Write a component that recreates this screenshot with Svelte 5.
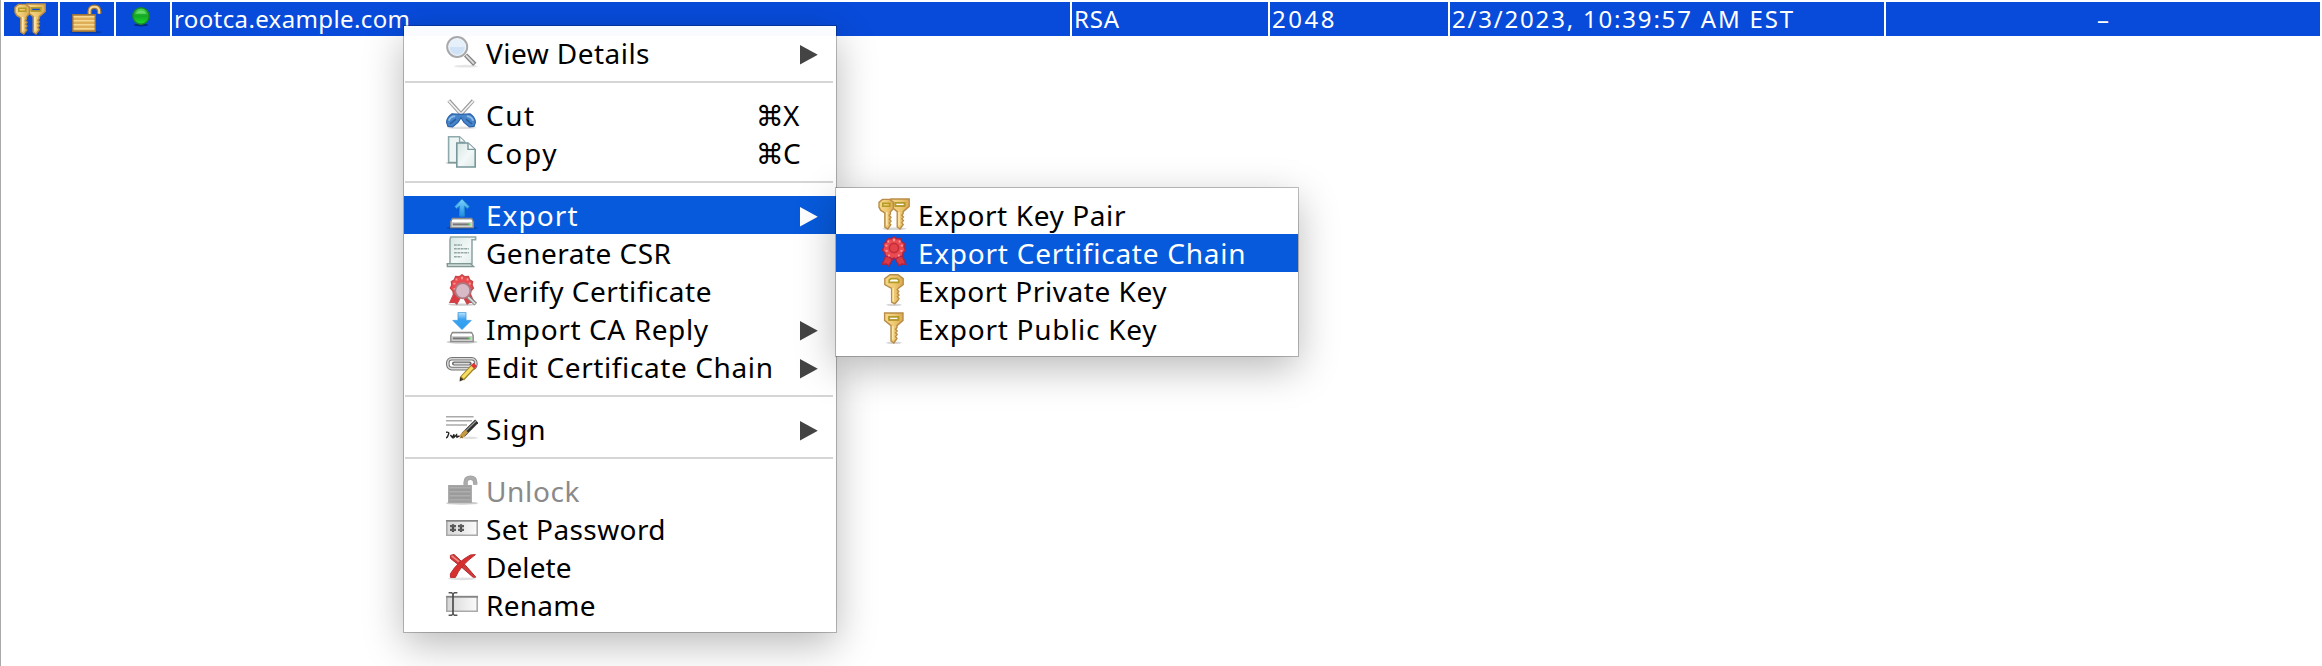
<script>
  const groups = [
    [{ icon: 'zoom', label: 'View Details', width: 163.5, arrow: true }],
    [
      { icon: 'cut', label: 'Cut', width: 48, keys: '⌘X' },
      { icon: 'copy', label: 'Copy', width: 70.5, keys: '⌘C' }
    ],
    [
      { icon: 'export', label: 'Export', width: 91.5, arrow: true, active: true },
      { icon: 'script', label: 'Generate CSR', width: 185 },
      { icon: 'verify', label: 'Verify Certificate', width: 225.5 },
      { icon: 'import', label: 'Import CA Reply', width: 222, arrow: true },
      { icon: 'chain', label: 'Edit Certificate Chain', width: 287, arrow: true }
    ],
    [{ icon: 'sign', label: 'Sign', width: 59.5, arrow: true }],
    [
      { icon: 'lockgray', label: 'Unlock', width: 93.5, disabled: true },
      { icon: 'password', label: 'Set Password', width: 179.5 },
      { icon: 'delete', label: 'Delete', width: 85.5 },
      { icon: 'rename', label: 'Rename', width: 109.5 }
    ]
  ];

  const exports = [
    { icon: 'pair', label: 'Export Key Pair', width: 207.5 },
    { icon: 'ribbon', label: 'Export Certificate Chain', width: 327.5, active: true },
    { icon: 'roundkey', label: 'Export Private Key', width: 248.5 },
    { icon: 'squarekey', label: 'Export Public Key', width: 238.5 }
  ];

  // Tracks the text out so that it fills the given advance width.
  function fit(node, width) {
    const natural = node.getBoundingClientRect().width;
    const gaps = node.textContent.length - 1;
    if (gaps > 0) node.style.letterSpacing = `${(width - natural) / gaps}px`;
  }
</script>

{#snippet roundHead()}
  <path d="M5 .7h3.6l1.9 1.4v3.2L9 7v1l-.6.8.9.9-.8.9.8.9-.8 1 .7.9-1.5 2.1-1.5-.9V7.4L4.2 6.2 3.3 4.6V2.2z" fill="url(#gold)" stroke="#b98d48" stroke-width=".7" />
  <path d="M5.2 2.6h3.5v1.5H5.2z" fill="none" stroke="#b39b27" stroke-width=".8" />
  <path d="M7.2 7v6.8" stroke="#fbe7ad" stroke-width=".8" />
{/snippet}

{#snippet squareHead()}
  <path fill-rule="evenodd" d="M3.3.5h9.2v3.7L9.5 6.8v1l-.7.8.8.9-.8.9.8.9-.8 1 .7.9-1.6 2.3-1.4-1V6.8L3.3 4.2zM5.7 2.4v1.6h4.4V2.4z" fill="url(#gold)" stroke="#b98d48" stroke-width=".7" />
  <path d="M5.5 2.4h4.8v1.6H5.5z" fill="none" stroke="#b39b27" stroke-width=".8" />
  <path d="M7.4 7v6.8" stroke="#fbe7ad" stroke-width=".8" />
{/snippet}

{#snippet pair()}
  <ellipse cx="8.2" cy="15.4" rx="6" ry=".7" fill="#000" opacity=".16" />
  <g transform="translate(3.1 0)">{@render squareHead()}</g>
  <g transform="translate(-2.8 0)">{@render roundHead()}</g>
{/snippet}

{#snippet lock(body, edge, light)}
  <g transform="translate(0 .9)">
    <ellipse cx="8" cy="13.7" rx="8" ry=".8" fill="#000" opacity=".2" />
    <path d="M9.8 5.2V3.3Q9.8 1 12.2 1t2.4 2.4v1.1" fill="none" stroke={edge} stroke-width="2.2" />
    <path d="M9.8 5.2V3.3Q9.8 1 12.2 1t2.4 2.4v1.1" fill="none" stroke={light} stroke-width="1" />
    <path d="M1.4 5h11.2v8.2H1.4z" fill={body} stroke={edge} stroke-width=".7" />
    <path d="M1.8 6h10.4M1.8 8h10.4M1.8 10h10.4M1.8 12h10.4" stroke={light} stroke-width=".8" />
  </g>
{/snippet}

{#snippet drive()}
  <ellipse cx="8" cy="15" rx="7.8" ry=".9" fill="#000" opacity=".18" />
  <path d="M3.2 10.2h9.6l.8 1.6v3H2.4v-3z" fill="#d0d0d0" stroke="#8d8d8d" stroke-width=".7" />
  <path d="M3 11.5h10" stroke="#fff" stroke-width="1" />
  <path d="M3.4 13.2h8" stroke="#777" stroke-width="1" />
  <path d="M11.2 12.7h1v1h-1z" fill="#42e03e" />
{/snippet}

{#snippet ribbonBody(edge)}
  <path d="M4.3 9 2 14.2l2.2-.2 1.2 1 2-3.7h1.2l2 3.7 1.2-1 2.2.2L11.7 9z" fill="#dc3a43" stroke={edge} stroke-width=".7" />
  <path d="m8 .4 1.4 1 1.8-.1.6 1.6 1.5.9-.3 1.7.7 1.6-1.2 1.3-.3 1.7-1.8.3L9 11.5 8 11l-1.2.5-1.3-1.1-1.7-.3-.4-1.7-1.2-1.3.7-1.6-.2-1.7 1.5-.9.6-1.6 1.8.1z" fill="#ea4b51" stroke={edge} stroke-width=".7" />
  <path d="M5.2 2.3v1M8 1.4v1.2M10.8 2.3v1M3.7 4.8h1M11.4 4.8h1M3.8 7.4h1M11.2 7.4h1M5.5 9.3v.9M10.4 9.3v.9" stroke="#ff9a98" stroke-width=".9" />
{/snippet}

{#snippet icon(name)}
  <svg class="icon" viewBox="0 0 16 16" aria-hidden="true">
    {#if name === 'zoom'}
      <ellipse cx="10" cy="15.1" rx="6" ry=".7" fill="#000" opacity=".1" />
      <path d="m9.8 9.5 4.6 4.7" stroke="#858585" stroke-width="2.3" />
      <path d="m10 9.7 4 4.1" stroke="#dcdcdc" stroke-width="1" />
      <circle cx="5.6" cy="5.5" r="4.9" fill="#d0e3f6" stroke="#a9a9ab" stroke-width="1.2" />
      <path d="M1.5 5.5a4.1 4.1 0 0 1 8.2 0z" fill="#e5f0fa" />
      <circle cx="5.6" cy="5.5" r="4.2" fill="none" stroke="#eef4f9" stroke-width=".6" />
    {:else if name === 'cut'}
      <ellipse cx="8" cy="14.9" rx="7.5" ry=".6" fill="#000" opacity=".12" />
      <path d="m1.4 1.2 7.2 8M13.6 1.2l-7.2 8" stroke="#999" stroke-width="1.9" />
      <path d="m1.4 1.4 7 7.6M13.6 1.4l-7 7.6" stroke="#f0f0f0" stroke-width=".9" />
      <path d="M7.5 8.2 3 7.9Q.4 9.6.3 12.2l.7 2 2.3.2L6 12.2l1.5-2.4 1.5 2.4 2.7 2.2 2.3-.2.7-2q-.1-2.6-2.7-4.3z" fill="#4785ca" stroke="#2c63a8" stroke-width=".6" />
      <path d="M1.4 11.4Q2 9.4 4.6 9.1M10.4 9.1q2.6.3 3.2 2.3" fill="none" stroke="#8dbcea" stroke-width=".9" />
      <path d="m2 12.9 3-2.3M13 12.9l-3-2.3" stroke="#2a609d" stroke-width=".8" />
    {:else if name === 'copy'}
      <path d="M1.3.4h5.5l2.5 2.4v10.5h-8z" fill="#eef6f5" stroke="#8ea9aa" stroke-width=".8" />
      <path d="M6.8.5v2.6h2.6" fill="#fff" stroke="#8ea9aa" stroke-width=".7" />
      <path d="M0 13.5h5" stroke="#000" stroke-width=".7" opacity=".15" />
      <path d="M5.4 3.5H11l3.6 3.3v8.7H5.4z" fill="url(#paper)" stroke="#78979a" stroke-width=".8" />
      <path d="M11 3.6v3.1h3.4" fill="#fff" stroke="#78979a" stroke-width=".7" />
    {:else if name === 'export'}
      {@render drive()}
      <path d="m8 .5 3.6 3.8-.8 1-1.6-1.2v5H6.8v-5L5.2 5.3l-.8-1z" fill="url(#up)" stroke="#2387cf" stroke-width=".5" />
    {:else if name === 'import'}
      {@render drive()}
      <path d="M6 .2h4v4h2.6L8 8.8 3.4 4.2H6z" fill="url(#down)" stroke="#3b9be2" stroke-width=".4" />
    {:else if name === 'script'}
      <path d="M2.3.5h12.5v1.4H13v12H2V2z" fill="url(#paper)" stroke="#91a9a6" stroke-width=".8" />
      <path d="M.6 13.8h11.6l1.6 1.5H.7z" fill="#c9d7d3" stroke="#809894" stroke-width=".7" />
      <path d="M4 4.5h4M4 6.4h7.4M4 8.4h7.4M4 10.4h3.8" stroke="#93a7a4" stroke-width=".8" stroke-dasharray="1.4 .3" />
    {:else if name === 'verify'}
      <ellipse cx="8" cy="15.3" rx="7" ry=".6" fill="#000" opacity=".2" />
      {@render ribbonBody('#c9474a')}
      <path d="m11 11.5 3.9 3.6" stroke="#858585" stroke-width="1.9" />
      <path d="m11 11.5 3.6 3.4" stroke="#ddd" stroke-width=".8" />
      <circle cx="8.4" cy="8.4" r="3.8" fill="#d8b9c6" stroke="#a97a82" stroke-width=".9" />
    {:else if name === 'chain'}
      <g transform="translate(0 1.8)">
        <rect x=".9" y="2.6" width="14" height="4.9" rx="2" fill="none" stroke="#747474" stroke-width="1.8" />
        <rect x=".9" y="2.6" width="14" height="4.9" rx="2" fill="none" stroke="#d8d8d8" stroke-width=".8" />
        <path d="M4 5h7.8" stroke="#666" stroke-width="2" stroke-linecap="round" />
        <path d="M4.2 5h7.3" stroke="#ddd" stroke-width=".9" stroke-linecap="round" />
        <path d="m8 12.5 5.7-6.1" stroke="#a18427" stroke-width="2.7" />
        <path d="m8.3 12 5-5.3" stroke="#f7de62" stroke-width="1.6" />
        <path d="m13.3 6.8 1.3-1.4" stroke="#e0363b" stroke-width="2.4" />
        <path d="m7 11.6 1.8 1.5-2 .8z" fill="#3d3219" />
      </g>
    {:else if name === 'sign'}
      <path d="M0 2.4h13.8M0 4.4h13M0 6.5h10.5" stroke="#aaa" stroke-width=".8" />
      <ellipse cx="12" cy="12.9" rx="4" ry=".6" fill="#000" opacity=".12" />
      <path d="M0 10.1q2-.3 1.1 1.4Q.7 12.9 0 12.9m2.2-1.4 1 1.2.8-1.5v1.5l1.3-1.3.2 1.2 1.3-.7" fill="none" stroke="#222" stroke-width=".7" />
      <path d="m8.5 11.5 6.9-6.9" stroke="#303030" stroke-width="2.3" />
      <path d="m10 9.3 5-4.8" stroke="#9b9b9b" stroke-width=".6" />
      <path d="m7.4 12.5 2.9-2.9" stroke="#c79943" stroke-width="2" />
      <path d="m6.7 13.2 1-1.3 1 .9z" fill="#8a6428" />
    {:else if name === 'lock'}
      {@render lock('#dfae59', '#9b733c', '#f8d993')}
    {:else if name === 'lockgray'}
      {@render lock('#9b9b9b', '#a6a6a6', '#adadad')}
    {:else if name === 'password'}
      <path d="M.4 4.4h15.2v7.2H.4z" fill="url(#field)" stroke="#a9a9a9" stroke-width=".8" />
      <path d="M0 4.4h16" stroke="#858585" stroke-width=".8" />
      <path d="M3.5 6.1V10M7.5 6.1V10" stroke="#484848" stroke-width="1.1" />
      <path d="M2 7.1h3M2 8.9h3M6 7.1h3M6 8.9h3" stroke="#5c5c5c" stroke-width="1.1" />
    {:else if name === 'delete'}
      <g transform="translate(0 1.5)">
        <ellipse cx="8" cy="12.9" rx="7" ry=".7" fill="#000" opacity=".12" />
        <path d="M2.2 1.2 4 .7Q9.2 5 14.9 12.1h-1.4Q8 7 2.2 2.7z" fill="#cf3c3c" stroke="#b82b2e" stroke-width=".5" />
        <path d="m14.7.8-2.5.2Q5.8 4.3 2.2 10.4v1.8h2.5Q7.2 6.2 14.7.8z" fill="#d8302f" stroke="#b82b2e" stroke-width=".5" />
        <path d="m2.8 1.4 3.7 2.9" stroke="#f08b88" stroke-width=".8" />
      </g>
    {:else if name === 'rename'}
      <path d="M.4 4.3h15.2v7.3H.4z" fill="url(#field)" stroke="#a9a9a9" stroke-width=".8" />
      <path d="M0 4.4h16" stroke="#858585" stroke-width=".8" />
      <path d="M3.5 2.5v11" stroke="#444" stroke-width=".8" />
      <path d="M1.3 2.4h1.5l.7.6.7-.6h1.5M1.3 13.6h1.5l.7-.6.7.6h1.5" fill="none" stroke="#555" stroke-width=".7" />
    {:else if name === 'pair'}
      {@render pair()}
    {:else if name === 'ribbon'}
      {@render ribbonBody('#a72549')}
      <circle cx="8" cy="6" r="2.3" fill="#e2434a" stroke="#c52d3b" stroke-width=".8" />
    {:else if name === 'roundkey'}
      <ellipse cx="8" cy="15.4" rx="4" ry=".6" fill="#000" opacity=".16" />
      <path d="M6 .4h4l2.6 1.9v3L10 7.2l-.4.7.8.8-.7.9.8.9-.8.9.8.9-.6 1-1.5 1.6-1.6-.9V7.2L3.4 5.3v-3z" fill="url(#gold)" stroke="#b98d48" stroke-width=".7" />
      <path d="M5.6 4.2V3l1-.7h2.8l1 .7v1.2z" fill="#fff" stroke="#b39b27" stroke-width=".8" />
      <path d="M7.6 7v6.8" stroke="#fbe7ad" stroke-width=".8" />
    {:else if name === 'squarekey'}
      <ellipse cx="8" cy="15.4" rx="4" ry=".6" fill="#000" opacity=".16" />
      {@render squareHead()}
    {:else if name === 'status'}
      <ellipse cx="7.5" cy="11" rx="3.6" ry=".7" fill="#000" opacity=".4" />
      <circle cx="7.5" cy="6.5" r="4.1" fill="url(#green)" stroke="#178625" stroke-width=".7" />
      <path d="M4.8 5.4a3 3 0 0 1 5.4 0z" fill="#81ed82" opacity=".65" />
    {/if}
  </svg>
{/snippet}

{#snippet row(item)}
  <li class="item" class:active={item.active} class:disabled={item.disabled}>
    {@render icon(item.icon)}
    <span class="label"><span use:fit={item.width}>{item.label}</span></span>
    {#if item.keys}
      <span class="keys"><span class="cmd">{item.keys[0]}</span>{item.keys[1]}</span>
    {/if}
    {#if item.arrow}
      <svg class="arrow" viewBox="0 0 18 20"><path d="M0 0v19.6L17.8 9.8z" /></svg>
    {/if}
  </li>
{/snippet}

<svg class="defs" aria-hidden="true">
  <defs>
    <linearGradient id="gold"><stop stop-color="#f6d78d" /><stop offset=".5" stop-color="#efca73" /><stop offset="1" stop-color="#dba950" /></linearGradient>
    <linearGradient id="paper" x1="0" y1="0" x2="1" y2="1"><stop stop-color="#d6e6e2" /><stop offset=".55" stop-color="#f3f9f8" /><stop offset="1" stop-color="#dceae8" /></linearGradient>
    <linearGradient id="up" x1="0" y1="0" x2="0" y2="1"><stop stop-color="#7ed3fb" /><stop offset="1" stop-color="#1f8fe4" /></linearGradient>
    <linearGradient id="down" x1="0" y1="0" x2="0" y2="1"><stop stop-color="#bfe3fb" /><stop offset=".4" stop-color="#3ba4f0" /><stop offset="1" stop-color="#2a9cf2" /></linearGradient>
    <linearGradient id="field"><stop stop-color="#d6d6d6" /><stop offset="1" stop-color="#fbfbfb" /></linearGradient>
    <linearGradient id="green" x1="0" y1="0" x2="0" y2="1"><stop stop-color="#4fd657" /><stop offset=".5" stop-color="#14a824" /><stop offset="1" stop-color="#1fdc2a" /></linearGradient>
  </defs>
</svg>

<main>
  <div class="row">
    <div class="cell mark">{@render icon('pair')}</div>
    <div class="cell mark">{@render icon('lock')}</div>
    <div class="cell mark">{@render icon('status')}</div>
    <div class="cell"><span use:fit={236}>rootca.example.com</span></div>
    <div class="cell"><span use:fit={45}>RSA</span></div>
    <div class="cell"><span use:fit={62.5}>2048</span></div>
    <div class="cell"><span use:fit={341}>2/3/2023, 10:39:57 AM EST</span></div>
    <div class="cell dash">–</div>
  </div>

  <div class="menu context">
    {#each groups as group}
      <ul>
        {#each group as item}
          {@render row(item)}
        {/each}
      </ul>
    {/each}
  </div>

  <div class="menu submenu">
    <ul>
      {#each exports as item}
        {@render row(item)}
      {/each}
    </ul>
  </div>
</main>

<style>
  :global(body) {
    background: #fff;
    overflow: hidden;
  }

  .defs {
    position: absolute;
    width: 0;
    height: 0;
  }

  main {
    position: relative;
    box-sizing: border-box;
    height: 666px;
    padding: 2px 2px 0 3px;
    border-left: 1px solid #a9a9a9;
    overflow: hidden;
    font-family: 'Noto Sans', 'Open Sans', sans-serif;
    color: #000;
  }

  .row {
    display: grid;
    grid-template-columns: 54px 54px 54px 898px 196px 178px 434px 1fr;
    gap: 2px;
    height: 34px;
  }

  .cell {
    box-sizing: border-box;
    padding-left: 2px;
    background: #084bda;
    color: #fff;
    font-size: 24px;
    line-height: 34px;
    white-space: nowrap;
    overflow: hidden;
  }

  .mark {
    padding: 1px 0 0 10px;
  }

  .dash {
    padding: 0;
    text-align: center;
  }

  .icon {
    display: block;
    flex: none;
    width: 32px;
    height: 32px;
  }

  .menu {
    position: absolute;
    box-sizing: border-box;
    padding: 8px 0;
    background: rgba(255, 255, 255, 0.975);
    box-shadow:
      0 0 0 1px rgba(0, 0, 0, 0.24),
      0 12px 38px rgba(0, 0, 0, 0.28);
  }

  .context {
    left: 403px;
    top: 26px;
    width: 432px;
  }

  .submenu {
    left: 835px;
    top: 188px;
    width: 462px;
  }

  ul {
    margin: 0;
    padding: 0;
    list-style: none;
  }

  ul + ul::before {
    content: '';
    display: block;
    height: 2px;
    margin: 0 3px 0 1px;
    border: solid transparent;
    border-width: 9px 0 13px;
    background: #d5d5d5;
    background-clip: padding-box;
  }

  .item {
    display: flex;
    height: 38px;
    box-sizing: border-box;
    padding: 2px 18px 0 42px;
    font-size: 28px;
    line-height: 34px;
    white-space: nowrap;
  }

  .label {
    flex: 1;
    padding-left: 8px;
  }

  .active {
    background: #075adc;
    color: #fff;
  }

  .disabled {
    color: #8a8a8a;
  }

  .keys {
    width: 60px;
  }

  .cmd {
    display: inline-block;
    width: 25px;
    font-family: 'DejaVu Sans', sans-serif;
    font-size: 28px;
    line-height: 30px;
    text-indent: -2px;
  }

  .arrow {
    width: 18px;
    height: 20px;
    margin-top: 9px;
    fill: #444;
  }

  .active .arrow {
    fill: #fff;
  }
</style>
